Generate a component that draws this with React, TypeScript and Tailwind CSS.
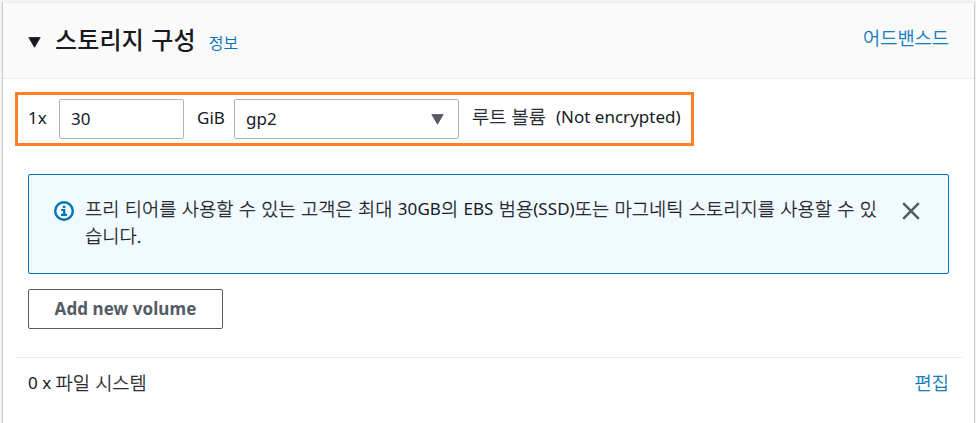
import type { ReactNode } from "react";

function Ko({ children }: { children: ReactNode }) {
  return <span className="font-['Noto_Sans_CJK_KR',sans-serif] align-[-1px] text-[18.7px] leading-0 font-light [word-spacing:1.1px] [-webkit-text-stroke:0.3px_currentColor]">{children}</span>;
}

function Caret({ className }: { className: string }) {
  return (
    <svg viewBox="0 0 13 11" className={`h-[11px] w-[13px] shrink-0 ${className}`} fill="currentColor">
      <path d="M0.8 0.5h11.4L6.5 10.2z" stroke="currentColor" strokeWidth="0.8" strokeLinejoin="round" />
    </svg>
  );
}

export default function App() {
  return (
    <div className="h-[423px] w-[976px] overflow-hidden bg-[#f2f3f3] pt-[2px] pr-[1px] pl-[2px] font-['Noto_Sans','Noto_Sans_CJK_KR',sans-serif] text-[17px] text-[#16191f]">
      <section className="h-[423px] border border-b-0 border-[#c3caca] border-t-[#eaeded] bg-white">
        <header className="flex h-[76px] items-start justify-between border-b border-[#eaeded] bg-[#fafafa] pr-[25px] pl-[25px]">
          <div className="flex">
            <Caret className="mt-[34px]" />
            <h2 className="mt-[18px] ml-[14px] font-['Noto_Sans_CJK_KR',sans-serif] text-[24px] leading-[36px] font-medium tracking-[0.2px] [word-spacing:1.5px] whitespace-nowrap">스토리지 구성</h2>
            <a className="mt-[27px] ml-[13px] font-['Noto_Sans_CJK_KR',sans-serif] text-[16px] leading-[24px] font-[350] whitespace-nowrap text-[#0073bb]">정보</a>
          </div>
          <a className="mt-[21px] leading-[27px] text-[#0073bb]"><Ko>어드밴스드</Ko></a>
        </header>
        <div className="px-[12px] pt-[13px]">
          <div className="flex h-[54px] w-[679px] items-start border-3 border-[#ff7f27] pt-[4px] pl-[10px] leading-[27px] whitespace-nowrap">
            <span className="mt-[5px] w-[31px]">1x</span>
            <div className="h-[40px] w-[125px] rounded-[2px] border border-[#aab7b8] pt-[5px] pl-[11px]">30</div>
            <span className="mt-[5px] ml-[13px] w-[37px]">GiB</span>
            <div className="flex h-[40px] w-[225px] justify-between rounded-[2px] border border-[#aab7b8] pt-[5px] pr-[14px] pl-[11px]">
              <span>gp2</span>
              <Caret className="mt-[9px] text-[#545b64]" />
            </div>
            <span className="mt-[4px] ml-[13px] w-[84px]"><Ko>루트 볼륨</Ko></span>
            <span className="mt-[4px]">(Not encrypted)</span>
          </div>
          <div className="mt-[28px] ml-[13px] flex h-[100px] w-[921px] rounded-[2px] border border-[#0073bb] bg-[#f1faff] pt-[20px] pl-[25px]">
            <svg viewBox="0 0 20 20" className="mt-[6px] h-[20px] w-[20px] shrink-0 text-[#0073bb]" fill="none" stroke="currentColor" strokeWidth="2.4">
              <circle cx="10" cy="10" r="8.8" />
              <path d="M8.8 5.9h2.6M7.2 9h3v4.8M7 13.8h6" strokeWidth="2.2" />
            </svg>
            <p className="ml-[11px] w-[800px] leading-[27px] tracking-[0.05px] whitespace-nowrap">
              <Ko>프리 티어를 사용할 수 있는 고객은 최대 </Ko>30GB<Ko>의 </Ko>EBS<Ko> 범용</Ko>(SSD)<Ko>또는 마그네틱 스토리지를 사용할 수 있</Ko>
              <br />
              <Ko>습니다.</Ko>
            </p>
            <svg viewBox="0 0 18 18" className="mt-[7px] ml-[17px] h-[18px] w-[18px] shrink-0" stroke="#545b64" strokeWidth="2.5">
              <path d="M1.2 1.2l15.6 15.6M16.8 1.2L1.2 16.8" />
            </svg>
          </div>
          <button className="mt-[15px] ml-[13px] block h-[40px] w-[195px] rounded-[2px] border border-[#545b64] text-[17px] leading-[38px] font-bold tracking-[0.08px] whitespace-nowrap text-[#545b64]">
            Add new volume
          </button>
          <div className="mt-[28px] ml-px flex justify-between border-t border-[#eaeded] pt-[11px] pr-[13px] pl-[12px] leading-[27px]">
            <span>0 x <Ko>파일 시스템</Ko></span>
            <a className="text-[#0073bb]"><Ko>편집</Ko></a>
          </div>
        </div>
      </section>
    </div>
  );
}
